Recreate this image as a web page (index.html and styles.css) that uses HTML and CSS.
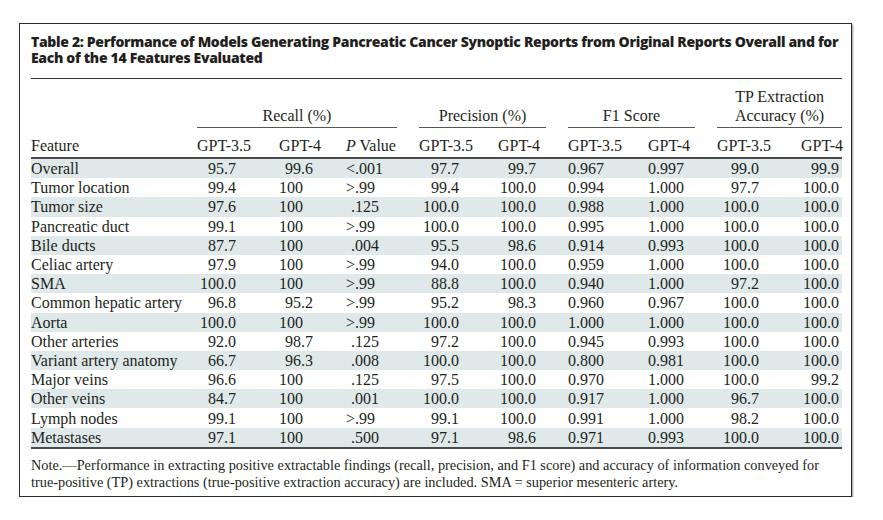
FILE: index.html
```html
<!DOCTYPE html>
<html>
<head>
<meta charset="utf-8">
<link rel="stylesheet" href="styles.css">
</head>
<body>
<div class="box">
  <h1 class="title">Table 2: Performance of Models Generating Pancreatic Cancer Synoptic Reports from Original Reports Overall and for Each of the 14 Features Evaluated</h1>
  <table class="tbl">
    <colgroup>
      <col class="c1"><col class="c2"><col class="c3"><col class="c4"><col class="c5"><col class="c6"><col class="c7"><col class="c8"><col class="c9"><col class="c10">
    </colgroup>
    <thead>
      <tr class="grp-row">
        <th></th>
        <th colspan="3" class="grp gap"><div class="grp-in">Recall (%)</div></th>
        <th colspan="2" class="grp gap"><div class="grp-in">Precision (%)</div></th>
        <th colspan="2" class="grp gap"><div class="grp-in">F1 Score</div></th>
        <th colspan="2" class="grp"><div class="grp-in">TP Extraction<br>Accuracy (%)</div></th>
      </tr>
      <tr class="col-row">
        <th>Feature</th>
        <th>GPT-3.5</th>
        <th>GPT-4</th>
        <th><i>P</i> Value</th>
        <th>GPT-3.5</th>
        <th>GPT-4</th>
        <th>GPT-3.5</th>
        <th>GPT-4</th>
        <th>GPT-3.5</th>
        <th class="last">GPT-4</th>
      </tr>
    </thead>
    <tbody>
      <tr class="band"><td>Overall</td><td class="r2">95.7</td><td class="r3">99.6</td><td class="r4">&lt;.001</td><td class="r5">97.7</td><td class="r6">99.7</td><td>0.967</td><td>0.997</td><td class="r9">99.0</td><td class="r10">99.9</td></tr>
      <tr><td>Tumor location</td><td class="r2">99.4</td><td class="r3">100<span class="ph">.0</span></td><td class="r4">&gt;.99<span class="ph">0</span></td><td class="r5">99.4</td><td class="r6">100.0</td><td>0.994</td><td>1.000</td><td class="r9">97.7</td><td class="r10">100.0</td></tr>
      <tr class="band"><td>Tumor size</td><td class="r2">97.6</td><td class="r3">100<span class="ph">.0</span></td><td class="r4">.125</td><td class="r5">100.0</td><td class="r6">100.0</td><td>0.988</td><td>1.000</td><td class="r9">100.0</td><td class="r10">100.0</td></tr>
      <tr><td>Pancreatic duct</td><td class="r2">99.1</td><td class="r3">100<span class="ph">.0</span></td><td class="r4">&gt;.99<span class="ph">0</span></td><td class="r5">100.0</td><td class="r6">100.0</td><td>0.995</td><td>1.000</td><td class="r9">100.0</td><td class="r10">100.0</td></tr>
      <tr class="band"><td>Bile ducts</td><td class="r2">87.7</td><td class="r3">100<span class="ph">.0</span></td><td class="r4">.004</td><td class="r5">95.5</td><td class="r6">98.6</td><td>0.914</td><td>0.993</td><td class="r9">100.0</td><td class="r10">100.0</td></tr>
      <tr><td>Celiac artery</td><td class="r2">97.9</td><td class="r3">100<span class="ph">.0</span></td><td class="r4">&gt;.99<span class="ph">0</span></td><td class="r5">94.0</td><td class="r6">100.0</td><td>0.959</td><td>1.000</td><td class="r9">100.0</td><td class="r10">100.0</td></tr>
      <tr class="band"><td>SMA</td><td class="r2">100.0</td><td class="r3">100<span class="ph">.0</span></td><td class="r4">&gt;.99<span class="ph">0</span></td><td class="r5">88.8</td><td class="r6">100.0</td><td>0.940</td><td>1.000</td><td class="r9">97.2</td><td class="r10">100.0</td></tr>
      <tr><td>Common hepatic artery</td><td class="r2">96.8</td><td class="r3">95.2</td><td class="r4">&gt;.99<span class="ph">0</span></td><td class="r5">95.2</td><td class="r6">98.3</td><td>0.960</td><td>0.967</td><td class="r9">100.0</td><td class="r10">100.0</td></tr>
      <tr class="band"><td>Aorta</td><td class="r2">100.0</td><td class="r3">100<span class="ph">.0</span></td><td class="r4">&gt;.99<span class="ph">0</span></td><td class="r5">100.0</td><td class="r6">100.0</td><td>1.000</td><td>1.000</td><td class="r9">100.0</td><td class="r10">100.0</td></tr>
      <tr><td>Other arteries</td><td class="r2">92.0</td><td class="r3">98.7</td><td class="r4">.125</td><td class="r5">97.2</td><td class="r6">100.0</td><td>0.945</td><td>0.993</td><td class="r9">100.0</td><td class="r10">100.0</td></tr>
      <tr class="band"><td>Variant artery anatomy</td><td class="r2">66.7</td><td class="r3">96.3</td><td class="r4">.008</td><td class="r5">100.0</td><td class="r6">100.0</td><td>0.800</td><td>0.981</td><td class="r9">100.0</td><td class="r10">100.0</td></tr>
      <tr><td>Major veins</td><td class="r2">96.6</td><td class="r3">100<span class="ph">.0</span></td><td class="r4">.125</td><td class="r5">97.5</td><td class="r6">100.0</td><td>0.970</td><td>1.000</td><td class="r9">100.0</td><td class="r10">99.2</td></tr>
      <tr class="band"><td>Other veins</td><td class="r2">84.7</td><td class="r3">100<span class="ph">.0</span></td><td class="r4">.001</td><td class="r5">100.0</td><td class="r6">100.0</td><td>0.917</td><td>1.000</td><td class="r9">96.7</td><td class="r10">100.0</td></tr>
      <tr><td>Lymph nodes</td><td class="r2">99.1</td><td class="r3">100<span class="ph">.0</span></td><td class="r4">&gt;.99<span class="ph">0</span></td><td class="r5">99.1</td><td class="r6">100.0</td><td>0.991</td><td>1.000</td><td class="r9">98.2</td><td class="r10">100.0</td></tr>
      <tr class="band"><td>Metastases</td><td class="r2">97.1</td><td class="r3">100<span class="ph">.0</span></td><td class="r4">.500</td><td class="r5">97.1</td><td class="r6">98.6</td><td>0.971</td><td>0.993</td><td class="r9">100.0</td><td class="r10">100.0</td></tr>
    </tbody>
  </table>
  <p class="note">Note.—Performance in extracting positive extractable findings (recall, precision, and F1 score) and accuracy of information conveyed for true-positive (TP) extractions (true-positive extraction accuracy) are included. SMA = superior mesenteric artery.</p>
</div>
</body>
</html>
```

FILE: styles.css
```css
html, body {
  margin: 0;
  padding: 0;
  background: #ffffff;
}

body {
  padding: 23px 0 0 19px;
  color: #231f20;
  font-family: "Liberation Serif", "Times New Roman", serif;
}

.box {
  width: 811px;
  border: 1.5px solid #2b2b2b;
  box-shadow: 1.5px 1.5px 0 #b8b8b8;
  padding: 10px 9px 5px 11px;
}

.title {
  margin: 0;
  font-family: "Open Sans", "DejaVu Sans", sans-serif;
  font-weight: 800;
  font-size: 14px;
  line-height: 16px;
  letter-spacing: -0.32px;
  color: #231f20;
  padding-bottom: 12px;
  border-bottom: 1px solid #333333;
}

.tbl {
  width: 811px;
  table-layout: fixed;
  border-collapse: collapse;
  font-size: 16px;
}

.c1 { width: 166px; }
.c2 { width: 82px; }
.c3 { width: 67px; }
.c4 { width: 73px; }
.c5 { width: 79px; }
.c6 { width: 70px; }
.c7 { width: 80px; }
.c8 { width: 69px; }
.c9 { width: 84px; }
.c10 { width: 41px; }

.tbl th {
  font-weight: normal;
  text-align: left;
  padding: 0;
  white-space: nowrap;
}

.grp-row th {
  height: 49px;
  vertical-align: bottom;
  padding-bottom: 1px;
  line-height: 19px;
}

.grp.gap {
  padding-right: 22px;
}

.grp-in {
  text-align: center;
  border-bottom: 1.5px solid #555555;
  padding-bottom: 2px;
}

.col-row th {
  height: 26px;
  vertical-align: bottom;
  line-height: 19px;
  padding-bottom: 2px;
  border-bottom: 2px solid #4a4a4a;
}

.col-row th.last {
  text-align: right;
  padding-right: 2px;
}

.tbl td {
  padding: 0;
  height: 19.2px;
  line-height: 19px;
  white-space: nowrap;
}

.tbl tbody tr:last-child td {
  border-bottom: 2px solid #4a4a4a;
}

.band td {
  background: #dfe9ea;
}

.r2 { text-align: right; padding-right: 43px !important; }
.r3 { text-align: right; padding-right: 33px !important; }
.r4 { text-align: right; padding-right: 40px !important; }
.r5 { text-align: right; padding-right: 39px !important; }
.r6 { text-align: right; padding-right: 32px !important; }
.r9 { text-align: right; padding-right: 42px !important; }
.r10 { text-align: right; padding-right: 3px !important; }

.ph {
  visibility: hidden;
}

.note {
  margin: 8px 0 0 0;
  font-size: 14.3px;
  line-height: 17px;
}
```
